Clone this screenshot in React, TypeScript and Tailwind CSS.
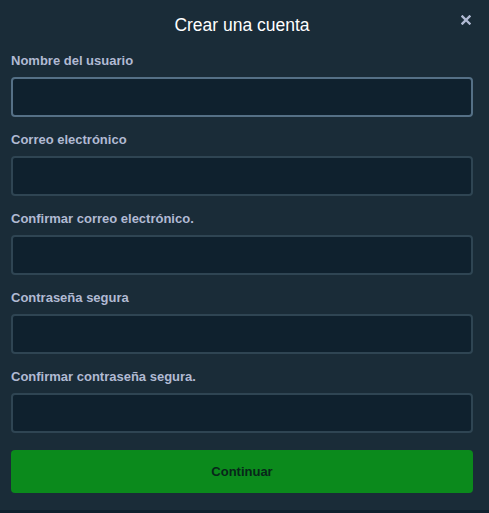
const FIELDS = [
  { label: "Nombre del usuario", active: true },
  { label: "Correo electrónico" },
  { label: "Confirmar correo electrónico." },
  { label: "Contraseña segura", type: "password" },
  { label: "Confirmar contraseña segura.", type: "password" },
];

export default function App() {
  return (
    <div className="h-[513px] w-[489px] bg-[#0f212e] font-['Liberation_Sans',Arial,sans-serif]">
      <div className="flex h-[510px] flex-col bg-[#1a2c38] pl-[11px] pr-[16px]">
        {/* Header */}
        <div className="relative flex h-[51px] shrink-0 items-center justify-center">
          <span className="text-[17.5px] text-white">Crear una cuenta</span>
          <button className="absolute right-0 top-[13px] flex h-[14px] w-[14px] items-center justify-center text-[#b1bad3]" aria-label="Cerrar">
            <svg viewBox="0 0 10 10" className="h-[10px] w-[10px]" fill="none" stroke="currentColor" strokeWidth="2.4" strokeLinecap="square">
              <path d="M1.5 1.5 8.5 8.5M8.5 1.5 1.5 8.5" />
            </svg>
          </button>
        </div>

        {/* Fields */}
        <div className="flex flex-col gap-[13px]">
          {FIELDS.map((f) => (
            <label key={f.label} className="flex flex-col">
              <span className="mb-[6px] h-5 text-[13px] font-bold leading-5 text-[#b1bad3]">{f.label}</span>
              <input
                type={f.type ?? "text"}
                className={
                  "h-10 w-full rounded-[4px] border-2 bg-[#0f212e] px-3 text-sm text-white outline-none " +
                  (f.active ? "border-[#557086]" : "border-[#2f4553]")
                }
              />
            </label>
          ))}
        </div>

        <button className="mt-[17px] h-[43px] w-full rounded-[4px] bg-[#0b8a1c] text-[13px] font-bold text-[#08261a]">
          Continuar
        </button>
      </div>
    </div>
  );
}
